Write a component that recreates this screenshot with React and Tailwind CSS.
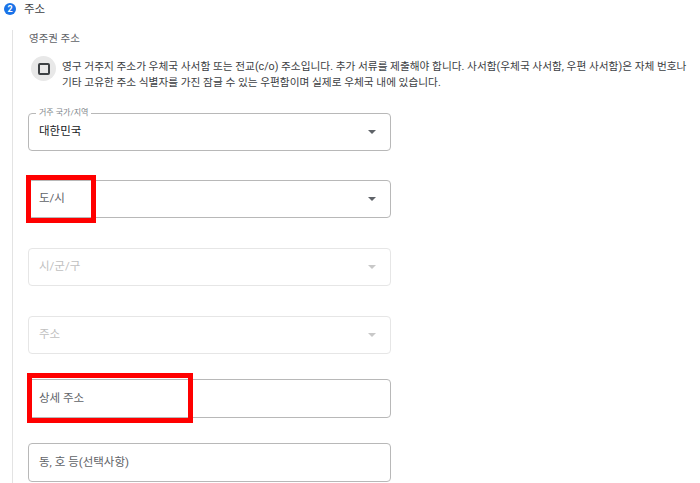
const font = { fontFamily: 'Roboto, "Noto Sans CJK KR", sans-serif' }

const Arrow = ({ disabled }) => (
  <svg width="8" height="4" viewBox="0 0 8 4" className="shrink-0">
    <path d="M0 0h8L4 4z" fill={disabled ? '#c8c8c8' : '#5f6368'} />
  </svg>
)

const SelectField = ({ value, label, disabled, className = '' }) => (
  <div
    className={`relative flex h-[38px] w-[363px] items-center justify-between rounded-[4px] border pl-[10px] pr-[14px] ${
      disabled ? 'border-[#e6e6e6]' : 'border-[#b8b8b8]'
    } ${className}`}
  >
    {label && (
      <span className="absolute left-[7px] top-[-6px] bg-white px-[3px] text-[8px] leading-[10px] text-[#80868b]">
        {label}
      </span>
    )}
    <span className={`text-[11.5px] ${disabled ? 'text-[#c0c0c0]' : label ? 'text-[#202124]' : 'text-[#5f6368]'}`}>
      {value}
    </span>
    <Arrow disabled={disabled} />
  </div>
)

const TextField = ({ placeholder, className = '' }) => (
  <div className={`flex h-[39px] w-[363px] items-center rounded-[4px] border border-[#b8b8b8] pl-[10px] ${className}`}>
    <span className="text-[11.5px] text-[#5f6368]">{placeholder}</span>
  </div>
)

export default function App() {
  return (
    <div className="relative h-[483px] w-[700px] overflow-hidden bg-white" style={font}>
      <div className="flex items-center pl-[4px] pt-[2px]">
        <span className="flex h-[12px] w-[12px] items-center justify-center rounded-full bg-[#1a73e8] text-[9px] font-bold leading-none text-white">
          2
        </span>
        <span className="ml-[8px] text-[11.5px] leading-[14px] text-[#3c4043]">주소</span>
      </div>

      <div className="ml-[12px] mt-[14px] border-l border-[#e3e3e3] pl-[15px] pb-[20px]">
        <div className="pl-[1px] pt-[2px] text-[10.5px] leading-[14px] text-[#5f6368]">영주권 주소</div>

        <div className="mt-[10px] flex items-start">
          <div className="ml-[3px] flex h-[25px] w-[25px] shrink-0 items-center justify-center rounded-full bg-[#e8e8e8]">
            <div className="h-[12px] w-[12px] rounded-[2px] border-[2px] border-[#3c4043]" />
          </div>
          <p className="ml-[6px] mt-[3px] whitespace-nowrap text-[10.7px] leading-[16px] text-[#3c4043]">
            영구 거주지 주소가 우체국 사서함 또는 전교(c/o) 주소입니다. 추가 서류를 제출해야 합니다. 사서함(우체국 사서함, 우편 사서함)은 자체 번호나
            <br />
            기타 고유한 주소 식별자를 가진 잠글 수 있는 우편함이며 실제로 우체국 내에 있습니다.
          </p>
        </div>

        <div className="mt-[22px] flex flex-col">
          <SelectField label="거주 국가/지역" value="대한민국" />
          <SelectField value="도/시" className="mt-[29px]" />
          <SelectField value="시/군/구" disabled className="mt-[30px]" />
          <SelectField value="주소" disabled className="mt-[30px]" />
          <TextField placeholder="상세 주소" className="mt-[25px]" />
          <TextField placeholder="동, 호 등(선택사항)" className="mt-[25px]" />
        </div>
      </div>

      <div className="pointer-events-none absolute left-[26px] top-[175px] h-[48px] w-[70px] border-[5px] border-[#ff0000]" />
      <div className="pointer-events-none absolute left-[27px] top-[373px] h-[50px] w-[166px] border-[5px] border-[#ff0000]" />
    </div>
  )
}
